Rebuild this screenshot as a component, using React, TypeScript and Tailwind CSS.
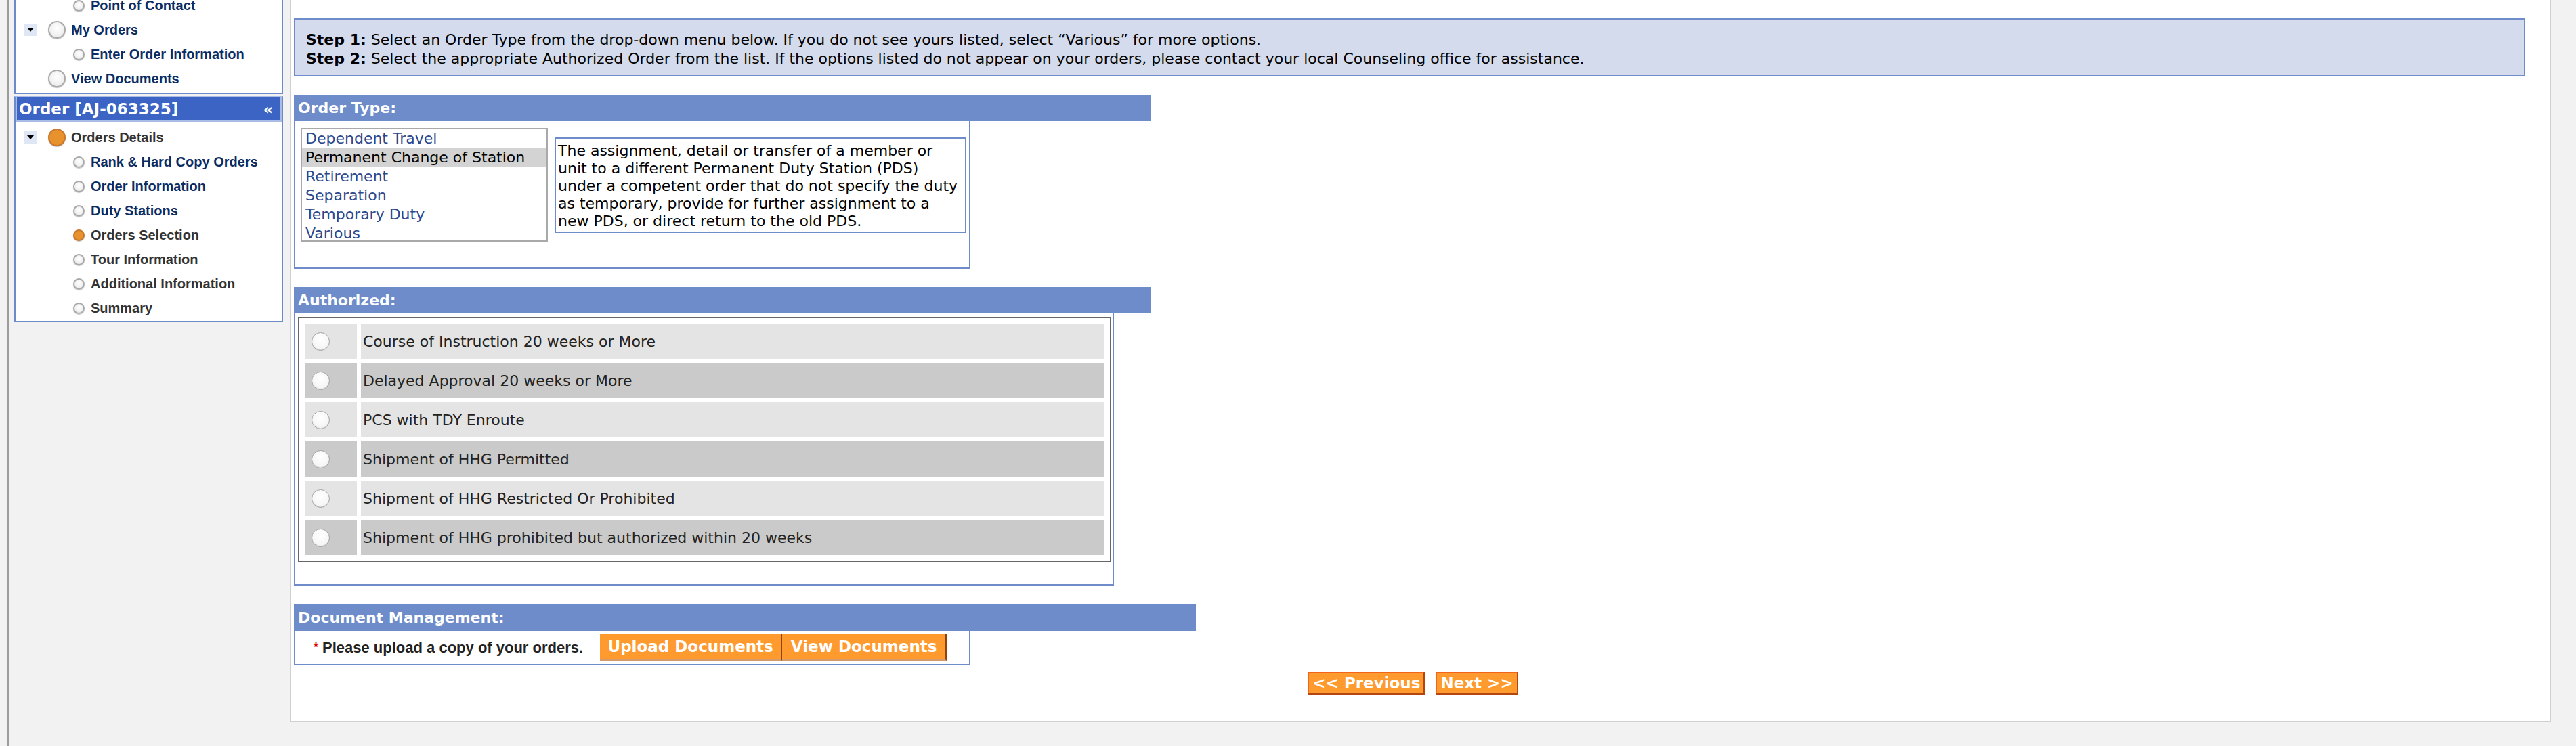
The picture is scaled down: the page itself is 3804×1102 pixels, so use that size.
const verdana = "font-['DejaVu_Sans',Verdana,sans-serif]";
const tahoma = "font-['Liberation_Sans',Tahoma,Arial,sans-serif]";

type NavItem = {
  label: string;
  level: 1 | 2;
  toggle?: boolean;
  active?: boolean;
  muted?: boolean;
};

const topNav: NavItem[] = [
  { label: "Point of Contact", level: 2 },
  { label: "My Orders", level: 1, toggle: true },
  { label: "Enter Order Information", level: 2 },
  { label: "View Documents", level: 1 },
];

const orderNav: NavItem[] = [
  { label: "Orders Details", level: 1, toggle: true, active: true, muted: true },
  { label: "Rank & Hard Copy Orders", level: 2 },
  { label: "Order Information", level: 2 },
  { label: "Duty Stations", level: 2 },
  { label: "Orders Selection", level: 2, active: true, muted: true },
  { label: "Tour Information", level: 2, muted: true },
  { label: "Additional Information", level: 2, muted: true },
  { label: "Summary", level: 2, muted: true },
];

const orderTypes = [
  "Dependent Travel",
  "Permanent Change of Station",
  "Retirement",
  "Separation",
  "Temporary Duty",
  "Various",
];

const authorized = [
  "Course of Instruction 20 weeks or More",
  "Delayed Approval 20 weeks or More",
  "PCS with TDY Enroute",
  "Shipment of HHG Permitted",
  "Shipment of HHG Restricted Or Prohibited",
  "Shipment of HHG prohibited but authorized within 20 weeks",
];

function Toggle() {
  return (
    <span className="flex h-[18px] w-[18px] shrink-0 items-center justify-center bg-[#dfe7f7]">
      <span className="h-0 w-0 border-x-[5px] border-t-[6px] border-x-transparent border-t-black" />
    </span>
  );
}

function Dot({ big, active }: { big?: boolean; active?: boolean }) {
  const size = big ? "h-[26px] w-[26px]" : "h-[17px] w-[17px]";
  const tone = active
    ? "bg-[#e8922d] border-[#c9772a]"
    : "bg-[radial-gradient(circle_at_50%_40%,#ffffff,#e6e6e6)] border-[#a9a9a9]";
  return (
    <span
      className={`${size} ${tone} shrink-0 rounded-full border-2 shadow-[0_1px_1px_rgba(0,0,0,0.25)]`}
    />
  );
}

function NavRow({ item }: { item: NavItem }) {
  const color = item.muted ? "text-[#333333]" : "text-[#0c2d63]";
  if (item.level === 1) {
    return (
      <div
        className={`flex h-[36px] items-center ${item.toggle ? "pl-[13px]" : "pl-[48px]"}`}
      >
        {item.toggle && (
          <span className="mr-[17px]">
            <Toggle />
          </span>
        )}
        <Dot big active={item.active} />
        <span className={`ml-[8px] text-[20px] font-bold leading-[16px] ${color}`}>
          {item.label}
        </span>
      </div>
    );
  }
  return (
    <div className="flex h-[36px] items-center pl-[85px]">
      <Dot active={item.active} />
      <span className={`ml-[9px] text-[20px] font-bold leading-[16px] ${color}`}>
        {item.label}
      </span>
    </div>
  );
}

function Sidebar() {
  return (
    <div className={`flex w-[397px] shrink-0 flex-col ${tahoma}`}>
      <div className="-mt-[10px] border-x-2 border-b-2 border-[#6b8bc9] bg-white pb-[3px]">
        {topNav.map((item) => (
          <NavRow key={item.label} item={item} />
        ))}
      </div>
      <div className="mt-[3px] border-x-2 border-b-2 border-t-2 border-[#6b8bc9] border-t-[#a8bce6] bg-white pb-[1px]">
        <div
          className={`flex h-[36px] items-center justify-between border-x-2 border-b-2 border-[#a8bce6] bg-[#3b64c4] pl-[3px] pr-[11px] text-white ${verdana}`}
        >
          <span className="text-[23px] font-bold">Order [AJ-063325]</span>
          <span className="text-[22px] font-bold">«</span>
        </div>
        <div className="pt-[5px]">
          {orderNav.map((item) => (
            <NavRow key={item.label} item={item} />
          ))}
        </div>
      </div>
    </div>
  );
}

function SectionHeader({ title, width, height }: { title: string; width: string; height: string }) {
  return (
    <div
      className={`${width} ${height} flex items-center bg-[#6e8cc9] pl-[6px] text-[22px] font-bold text-white`}
    >
      {title}
    </div>
  );
}

function OrderType() {
  return (
    <div>
      <SectionHeader title="Order Type:" width="w-[1266px]" height="h-[39px]" />
      <div className="flex w-[999px] items-center gap-[10px] border-x-2 border-b-2 border-[#6e8cc9] pb-[38px] pl-[8px] pt-[10px]">
        <div className="h-[168px] w-[365px] overflow-hidden border-2 border-[#a9a9a9] bg-white">
          {orderTypes.map((t, i) => (
            <div
              key={t}
              className={`h-[28px] whitespace-nowrap pl-[5px] text-[22px] leading-[28px] ${
                i === 1 ? "bg-[#d3d3d3] text-black" : "text-[#2c478c]"
              }`}
            >
              {t}
            </div>
          ))}
        </div>
        <div className="w-[608px] whitespace-nowrap border-2 border-[#6e8cc9] pb-[2px] pl-[3px] pt-[5px] text-[22px] leading-[26px] text-black">
          The assignment, detail or transfer of a member or
          <br />
          unit to a different Permanent Duty Station (PDS)
          <br />
          under a competent order that do not specify the duty
          <br />
          as temporary, provide for further assignment to a
          <br />
          new PDS, or direct return to the old PDS.
        </div>
      </div>
    </div>
  );
}

function Authorized() {
  return (
    <div className="mt-[27px]">
      <SectionHeader title="Authorized:" width="w-[1266px]" height="h-[38px]" />
      <div className="w-[1211px] border-x-2 border-b-2 border-[#6e8cc9] pb-[33px] pl-[4px] pr-[2px] pt-[6px]">
        <div className="flex flex-col gap-[6px] border-2 border-[#666666] p-[8px]">
          {authorized.map((a, i) => {
            const bg = i % 2 === 0 ? "bg-[#e4e4e4]" : "bg-[#cacaca]";
            return (
              <div key={a} className="flex h-[52px] gap-[6px]">
                <div className={`flex w-[77px] items-center pl-[10px] ${bg}`}>
                  <span className="h-[27px] w-[27px] rounded-full border border-[#a3a3a3] bg-[radial-gradient(circle_at_50%_35%,#ffffff,#f1f1f1)] shadow-[inset_0_-1px_1px_rgba(0,0,0,0.12)]" />
                </div>
                <div
                  className={`flex flex-1 items-center pl-[3px] text-[22px] text-[#222222] ${bg}`}
                >
                  {a}
                </div>
              </div>
            );
          })}
        </div>
      </div>
    </div>
  );
}

function Documents() {
  return (
    <div className="mt-[27px]">
      <SectionHeader title="Document Management:" width="w-[1332px]" height="h-[40px]" />
      <div className="flex w-[999px] items-center border-x-2 border-b-2 border-[#6e8cc9] pb-[5px] pl-[27px] pt-[4px]">
        <span className={`${tahoma} mr-[6px] text-[18px] font-bold text-[#e00000]`}>*</span>
        <span className={`${tahoma} text-[22px] font-bold text-[#222222]`}>
          Please upload a copy of your orders.
        </span>
        <div className="ml-[25px] flex">
          <button className="h-[40px] w-[269px] border-b-2 border-r-2 border-b-[#d69a6a] border-r-[#8f4310] bg-[#fe9a2e] text-[23px] font-bold text-white">
            Upload Documents
          </button>
          <button className="h-[40px] w-[243px] border-b-2 border-r-2 border-b-[#d69a6a] border-r-[#8f4310] bg-[#fe9a2e] text-[23px] font-bold text-white">
            View Documents
          </button>
        </div>
      </div>
    </div>
  );
}

function StepButton({ label }: { label: string }) {
  return (
    <button className="h-[34px] border-2 border-b-[#b3450f] border-l-[#f0641c] border-r-[#b3450f] border-t-[#f0641c] bg-[#fe9a2e] px-[5px] text-[23px] font-bold leading-[30px] text-white">
      {label}
    </button>
  );
}

export default function App() {
  return (
    <div className={`flex h-[1102px] overflow-hidden bg-[#f2f2f2] ${verdana}`}>
      <div className="w-[10px] shrink-0" />
      <div className="w-[3px] shrink-0 bg-[#9c9c9c]" />
      <div className="w-[8px] shrink-0" />
      <Sidebar />
      <div className="w-[10px] shrink-0" />
      <main className="h-[1067px] w-[3339px] shrink-0 border-x-2 border-b-2 border-[#d0d0d0] bg-white pl-[4px] pr-[36px]">
        <div className="mt-[27px] border-2 border-[#6e8cc9] bg-[#d4dbec] pb-[10px] pl-[16px] pt-[16px] text-[22px] leading-[28px] text-black">
          <div>
            <b>Step 1:</b> Select an Order Type from the drop-down menu below. If you do not see yours listed, select “Various” for more options.
          </div>
          <div>
            <b>Step 2:</b> Select the appropriate Authorized Order from the list. If the options listed do not appear on your orders, please contact your local Counseling office for assistance.
          </div>
        </div>
        <div className="mt-[27px]">
          <OrderType />
        </div>
        <Authorized />
        <Documents />
        <div className="mt-[9px] flex justify-center gap-[16px] pl-[10px]">
          <StepButton label="<< Previous" />
          <StepButton label="Next >>" />
        </div>
      </main>
    </div>
  );
}
